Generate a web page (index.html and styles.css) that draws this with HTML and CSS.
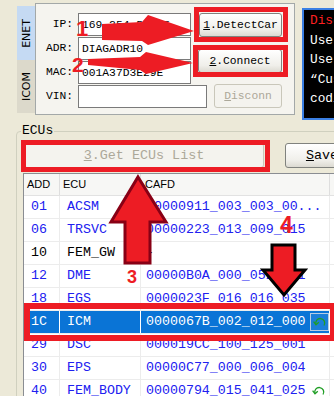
FILE: index.html
```html
<!DOCTYPE html>
<html lang="en">
<head>
    <meta charset="UTF-8">
    <meta name="viewport" content="width=device-width, initial-scale=1.0">
    <title>ECU Coding</title>
    <link rel="stylesheet" href="styles.css">
</head>
<body>
    <!-- connection area -->
    <div class="top">
        <div class="side-tabs">
            <div class="vtab active"><span>ENET</span></div>
            <div class="vtab"><span>ICOM</span></div>
        </div>

        <div class="conn-panel">
            <button class="btn btn-detect"><u>1</u>.DetectCar</button>
            <button class="btn btn-connect"><u>2</u>.Connect</button>
            <button class="btn btn-disc" disabled><u>D</u>isconn</button>

            <label class="lbl">IP:</label>
            <input class="fld" value="169.254.53.85">
            <label class="lbl">ADR:</label>
            <input class="fld" value="DIAGADR10">
            <label class="lbl">MAC:</label>
            <input class="fld" value="001A37D3E29E">
            <label class="lbl">VIN:</label>
            <input class="fld long" value="">
        </div>

        <div class="console">
            <div class="err">Disconnected.</div>
            <div>Use DetectCar first</div>
            <div>Use Connect next</div>
            <div>“Customer”</div>
            <div>coding</div>
        </div>
    </div>

    <!-- ECU list -->
    <fieldset class="ecus">
        <legend>ECUs</legend>
        <div class="ecu-actions">
            <button class="btn btn-get" disabled><u>3</u>.Get ECUs List</button>
            <button class="btn btn-save"><u>S</u>ave</button>
        </div>

        <div class="ecu-list">
            <div class="row head">
                <span>ADD</span><span>ECU</span><span>CAFD</span><span></span>
            </div>
            <div class="row"><span>01</span><span>ACSM</span><span>00000911_003_003_00...</span><span></span></div>
            <div class="row"><span>06</span><span>TRSVC</span><span>00000223_013_009_015</span><span></span></div>
            <div class="row plain"><span>10</span><span>FEM_GW</span><span>-</span><span></span></div>
            <div class="row"><span>12</span><span>DME</span><span>00000B0A_000_052_031</span><span></span></div>
            <div class="row"><span>18</span><span>EGS</span><span>0000023F_016_016_035</span><span></span></div>
            <div class="row sel">
                <span>1C</span><span>ICM</span>
                <span class="cafd">0000067B_002_012_000
                    <i class="undo-box">
                        <svg width="14" height="12" viewBox="0 0 14 12"><path d="M3 8.5 A4.5 4.5 0 1 1 11 9.5" fill="none" stroke="#1f9e24" stroke-width="1.3"/><path d="M0.6 5.6 L3 8.8 L5.8 6.2" fill="none" stroke="#1f9e24" stroke-width="1.3"/></svg>
                    </i>
                </span><span></span>
            </div>
            <div class="row"><span>29</span><span>DSC</span><span>000019CC_100_125_001</span><span></span></div>
            <div class="row"><span>30</span><span>EPS</span><span>00000C77_000_006_004</span><span></span></div>
            <div class="row">
                <span>40</span><span>FEM_BODY</span>
                <span class="cafd">00000794_015_041_025
                    <i class="undo-plain">
                        <svg width="14" height="12" viewBox="0 0 14 12"><path d="M3 8.5 A4.5 4.5 0 1 1 11 9.5" fill="none" stroke="#1f9e24" stroke-width="1.3"/><path d="M0.6 5.6 L3 8.8 L5.8 6.2" fill="none" stroke="#1f9e24" stroke-width="1.3"/></svg>
                    </i>
                </span><span></span>
            </div>
        </div>
    </fieldset>

    <!-- red hand-drawn notes on top of the screenshot -->
    <div class="notes">
        <div class="mark m1"></div>
        <div class="mark m2"></div>
        <div class="mark m3"></div>
        <div class="mark m4"></div>
        <svg class="arrows" width="334" height="396" viewBox="0 0 334 396">
            <polygon points="102,24 142,22 148,15 194,31 148,45 142,41 102,40" fill="#ed1c24"/>
            <polygon points="88,59 140,57 146,52 193,63 146,74 140,70 88,65" fill="#ed1c24"/>
            <polygon points="138,177 166,222 150,222 150,263 125,263 125,222 111,222" fill="#ed1c24" stroke="#880015" stroke-width="3"/>
            <polygon points="272,245 295,245 295,270 305,270 284,295 263,270 272,270" fill="#ed1c24" stroke="#000" stroke-width="3"/>
            <text x="76" y="36" class="num" font-size="22">1</text>
            <text x="72" y="72" class="num" font-size="21">2</text>
            <text x="127" y="283" class="num" font-size="18">3</text>
            <text x="280" y="233" class="num" font-size="23">4</text>
        </svg>
    </div>
</body>
</html>
```

FILE: styles.css
```css
body {
    margin: 0;
    width: 334px;
    height: 396px;
    overflow: hidden;
    position: relative;
    background-color: #ece9d8;
    font-family: "Liberation Mono", monospace;
    color: #000;
}

/* top row: tabs, connection panel, console */
.top {
    display: flex;
    align-items: flex-start;
    height: 120px;
}

.side-tabs {
    margin: 6px 0 0 17px;
    width: 18px;
    flex-shrink: 0;
    display: flex;
    flex-direction: column;
}

.vtab {
    height: 53px;
    display: flex;
    align-items: center;
    justify-content: center;
    background-color: #dcd9cb;
    font: 11px "DejaVu Sans", sans-serif;
}

.vtab.active {
    height: 54px;
    background-color: #c5daf3;
}

.vtab span {
    writing-mode: vertical-rl;
    transform: rotate(180deg);
}

.conn-panel {
    margin-top: 3px;
    width: 260px;
    height: 112px;
    flex-shrink: 0;
    box-sizing: border-box;
    border: 1px solid #a3a8a8;
    background-color: #f5f4ef;
    padding-top: 9px;
    display: grid;
    grid-template-columns: 37px 125px 84px;
    grid-template-rows: repeat(4, 24px);
    align-content: start;
}

.lbl {
    grid-column: 1;
    align-self: start;
    line-height: 23px;
    text-align: right;
    font-size: 11.3px;
}

.fld {
    grid-column: 2;
    margin: 0 0 0 5px;
    width: 113px;
    height: 23px;
    box-sizing: border-box;
    border: 1px solid #7a7a7a;
    background-color: #fff;
    padding: 0 3px;
    font: 11.3px "Liberation Mono", monospace;
    color: #000;
    outline: none;
}

.fld.long {
    width: 129px;
}

/* xp style buttons */
.btn {
    padding: 0;
    border: 1px solid #80827e;
    border-radius: 3px;
    background: linear-gradient(#ffffff, #f0efea 70%, #dcdad2);
    font: 11.3px "Liberation Mono", monospace;
    color: #000;
    height: 24px;
}

.btn[disabled] {
    border-color: #c9c7ba;
    background: #f4f3ee;
    color: #aca899;
}

.btn-detect {
    grid-column: 3;
    grid-row: 1;
    justify-self: end;
    width: 83px;
}

.btn-connect {
    grid-column: 3;
    grid-row: 2 / span 2;
    align-self: center;
    justify-self: end;
    width: 84px;
    margin-top: -1px;
}

.btn-disc {
    grid-column: 3;
    grid-row: 4;
    justify-self: end;
    width: 68px;
    margin-top: -1px;
}

.console {
    margin: 8px 0 0 7px;
    width: 60px;
    height: 112px;
    flex-shrink: 0;
    box-sizing: border-box;
    border: 2px solid #3b80e4;
    background-color: #000;
    color: #fff;
    padding: 1px 0 0 6px;
    font: 12.8px/19.5px "Liberation Mono", monospace;
    white-space: nowrap;
    overflow: hidden;
}

.console .err {
    color: #ff2020;
}

/* ECUs group */
.ecus {
    margin: 4px 0 0 16px;
    padding: 5px 6px 0;
    width: 400px;
    box-sizing: border-box;
    border: 1px solid #d0d0bf;
    border-radius: 4px;
}

.ecus legend {
    margin-left: -2px;
    padding: 0 1px;
    font: 13px/14px "Liberation Mono", monospace;
}

.ecu-actions {
    display: flex;
    gap: 21px;
}

.btn-get {
    margin-left: 1px;
    width: 240px;
    height: 25px;
    font-size: 13.4px;
}

.btn-save {
    width: 74px;
    height: 25px;
    font-size: 13.4px;
}

.ecu-list {
    margin-top: 5px;
    border: 1px solid #8a8d92;
    background-color: #fff;
}

.row {
    display: grid;
    grid-template-columns: 36px 81px 189px 1fr;
    height: 23px;
    box-sizing: border-box;
    border-bottom: 1px solid #ececec;
}

.row span {
    border-right: 1px solid #ececec;
    padding-left: 7px;
    line-height: 22px;
    font-size: 13.3px;
    color: #2020f0;
    white-space: nowrap;
    overflow: hidden;
}

.row span:nth-child(3) {
    padding-left: 5px;
}

.row.plain span {
    color: #000;
}

.row.head {
    height: 22px;
    background-color: #f7f7f5;
    border-bottom: 1px solid #e2e2e2;
}

.row.head span {
    padding-left: 3px;
    line-height: 21px;
    font: 11px/21px "Liberation Sans", sans-serif;
    color: #000;
    border-right-color: #dedede;
}

.row.head span:nth-child(3) {
    padding-left: 4px;
}

.row.sel {
    background-color: #0a74d6;
}

.row.sel span {
    color: #fff;
    border-right-color: #fff;
}

.cafd {
    display: flex;
    align-items: center;
    justify-content: space-between;
}

.undo-box {
    display: flex;
    align-items: center;
    justify-content: center;
    width: 19px;
    height: 18px;
    box-sizing: border-box;
    border: 1px solid #b8cde3;
    background-color: #1c7fd8;
}

.undo-plain {
    display: flex;
    margin-right: 3px;
}

/* annotations */
.notes {
    position: absolute;
    left: 0;
    top: 0;
    width: 334px;
    height: 396px;
    pointer-events: none;
}

.arrows {
    position: absolute;
    left: 0;
    top: 0;
}

.num {
    font-family: "Liberation Sans", sans-serif;
    font-weight: bold;
    fill: #ed1c24;
}

.mark {
    position: absolute;
    box-sizing: border-box;
    border: 5px solid #ed1c24;
}

.m1 { left: 194px; top: 7px; width: 94px; height: 35px; }
.m2 { left: 193px; top: 45px; width: 95px; height: 32px; }
.m3 { left: 21px; top: 140px; width: 249px; height: 32px; }
.m4 { left: 24px; top: 303px; width: 312px; height: 38px; border-width: 6px; }
```
